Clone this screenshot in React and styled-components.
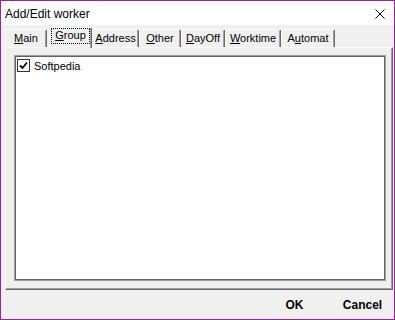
import React from "react";
import styled, { createGlobalStyle } from "styled-components";

const Global = createGlobalStyle`
  html, body { margin: 0; padding: 0; background: #ffffff; }
  * { box-sizing: border-box; }
`;

const Window = styled.div`
  width: 395px;
  height: 320px;
  border: 1px solid #a11fa0;
  background: #f0f0f0;
  display: flex;
  flex-direction: column;
  font-family: "Liberation Sans", Arial, sans-serif;
  color: #000;
`;

const TitleBar = styled.div`
  height: 24px;
  background: #ffffff;
  display: flex;
  align-items: center;
  justify-content: space-between;
  padding: 0 9px 0 4px;
`;

const Title = styled.span`
  font-size: 12px;
  line-height: 24px;
  padding-top: 1px;
`;

const CloseButton = styled.div`
  width: 10px;
  height: 10px;
  display: flex;
  margin-top: 2px;
`;

const TabRow = styled.div`
  display: flex;
  align-items: flex-end;
  height: 20px;
  margin: 2px 0 0 4px;
  position: relative;
  z-index: 1;
`;

const Tab = styled.div`
  width: ${(p) => p.$w}px;
  height: ${(p) => (p.$active ? 21 : 18)}px;
  margin-left: ${(p) => (p.$active ? 2 : 0)}px;
  margin-bottom: ${(p) => (p.$active ? -1 : 0)}px;
  background: #f0f0f0;
  border-top: 1px solid #ffffff;
  border-left: 1px solid #ffffff;
  border-right: 1px solid #696969;
  border-top-left-radius: 2px;
  border-top-right-radius: 2px;
  box-shadow: inset -1px 0 0 #a0a0a0;
  display: flex;
  justify-content: center;
  align-items: flex-start;
  font-size: 11px;
  padding: 0 1px;
`;

const TabLabel = styled.span`
  display: flex;
  justify-content: center;
  line-height: 14px;
  height: ${(p) => (p.$focus ? 16 : 15)}px;
  padding-top: ${(p) => (p.$focus ? 0 : 1)}px;
  width: ${(p) => (p.$focus ? "100%" : "auto")};
  outline: ${(p) => (p.$focus ? "1px dotted #000" : "none")};
  outline-offset: -1px;
`;

const Panel = styled.div`
  height: 243px;
  margin: 0 1px 0 4px;
  border-top: 1px solid #ffffff;
  border-left: 1px solid #ffffff;
  border-right: 1px solid #696969;
  border-bottom: 1px solid #696969;
  box-shadow: inset -1px -1px 0 #a0a0a0;
  padding: 7px 6px 8px 8px;
  display: flex;
`;

const ListBox = styled.div`
  flex: 1;
  background: #ffffff;
  border: 1px solid #a0a0a0;
  box-shadow: inset 0 0 0 1px #646464;
  padding: 3px 2px;
`;

const CheckRow = styled.label`
  display: flex;
  align-items: center;
  gap: 4px;
  font-size: 11px;
  height: 13px;
`;

const CheckBox = styled.span`
  width: 13px;
  height: 13px;
  border: 1px solid #333333;
  background: #fff;
  display: flex;
  align-items: center;
  justify-content: center;
`;

const ButtonBar = styled.div`
  flex: 1;
  display: flex;
  justify-content: flex-end;
  align-items: center;
  gap: 7px;
  padding: 0 1px 0 0;
`;

const Button = styled.button`
  width: 61px;
  height: 24px;
  border: none;
  background: transparent;
  font-family: "Liberation Sans", Arial, sans-serif;
  font-weight: bold;
  font-size: 12px;
  color: #000;
  padding: 0;
`;

const tabs = [
  { label: "Main", key: 0, w: 42 },
  { label: "Group", key: 0, w: 43, active: true },
  { label: "Address", key: 0, w: 47 },
  { label: "Other", key: 0, w: 42 },
  { label: "DayOff", key: 0, w: 44 },
  { label: "Worktime", key: 0, w: 56 },
  { label: "Automat", key: 1, w: 54 },
];

function Mnemonic({ text, idx }) {
  return (
    <span>
      {text.slice(0, idx)}
      <u>{text[idx]}</u>
      {text.slice(idx + 1)}
    </span>
  );
}

export default function App() {
  return (
    <>
      <Global />
      <Window>
        <TitleBar>
          <Title>Add/Edit worker</Title>
          <CloseButton>
            <svg width="10" height="10" viewBox="0 0 10 10">
              <path d="M0.5 0.5 L9.5 9.5 M9.5 0.5 L0.5 9.5" stroke="#000" strokeWidth="1" fill="none" />
            </svg>
          </CloseButton>
        </TitleBar>
        <TabRow>
          {tabs.map((t) => (
            <Tab key={t.label} $w={t.w} $active={t.active}>
              <TabLabel $focus={t.active}>
                <Mnemonic text={t.label} idx={t.key} />
              </TabLabel>
            </Tab>
          ))}
        </TabRow>
        <Panel>
          <ListBox>
            <CheckRow>
              <CheckBox>
                <svg width="9" height="9" viewBox="0 0 9 9">
                  <path d="M1 4.5 L3.5 7 L8 1.5" stroke="#000" strokeWidth="1.8" fill="none" />
                </svg>
              </CheckBox>
              Softpedia
            </CheckRow>
          </ListBox>
        </Panel>
        <ButtonBar>
          <Button>OK</Button>
          <Button>Cancel</Button>
        </ButtonBar>
      </Window>
    </>
  );
}
